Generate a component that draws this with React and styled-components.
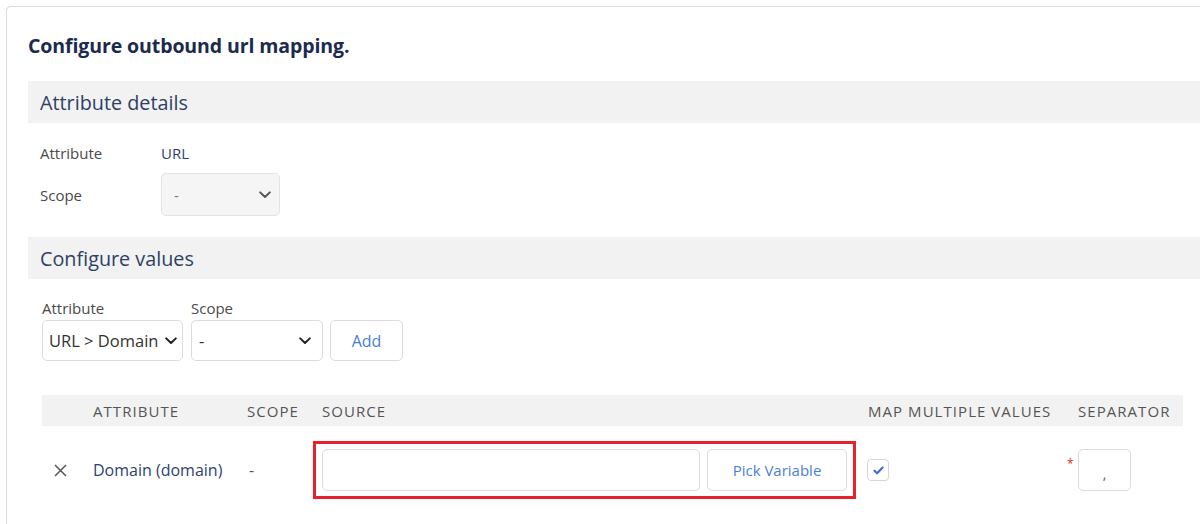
import React from "react";
import styled, { createGlobalStyle } from "styled-components";

const Global = createGlobalStyle`
  html, body { margin: 0; padding: 0; background: #fff; }
  body { font-family: "Open Sans", "Noto Sans", sans-serif; color: #444; overflow: hidden; }
  * { box-sizing: border-box; }
`;

const Card = styled.div`
  margin: 6px 0 0 6px;
  border: 1px solid #dcdcdc;
  border-right: none;
  border-radius: 5px 0 0 0;
  padding: 26px 0 40px 21px;
  min-height: 540px;
`;

const Title = styled.h1`
  margin: 0 0 22px 0;
  font-size: 19.5px;
  font-weight: 700;
  line-height: 26px;
  color: #1b2a4e;
  letter-spacing: -0.1px;
`;

const SectionBar = styled.div`
  background: #f2f2f2;
  height: 42px;
  display: flex;
  align-items: center;
  padding-left: 12px;
  font-size: 19.8px;
  color: #2e3f66;
`;

const Details = styled.div`
  padding: 16px 0 21px 12px;
  display: grid;
  grid-template-columns: 121px auto;
  row-gap: 6px;
  align-items: center;
`;

const Label = styled.div`
  font-size: 15px;
  color: #4a4a4a;
  line-height: ${(p) => p.$lh || "20px"};
`;

const Value = styled.div`
  font-size: 15px;
  color: #2e3f6e;
  line-height: 20px;
`;

const SelectBox = styled.div`
  width: ${(p) => p.$w}px;
  height: ${(p) => p.$h || 41}px;
  border: 1px solid ${(p) => (p.$disabled ? "#e3e3e3" : "#dcdcdc")};
  background: ${(p) => (p.$disabled ? "#f5f5f5" : "#fff")};
  border-radius: 5px;
  display: flex;
  align-items: center;
  justify-content: space-between;
  padding: 0 ${(p) => p.$pr || 12}px 0 ${(p) => p.$pl || 12}px;
  font-size: ${(p) => (p.$disabled ? 15 : 16.5)}px;
  color: ${(p) => (p.$disabled ? "#777" : "#333")};
  white-space: nowrap;
`;

const Chevron = ({ color = "#333" }) => (
  <svg width="12" height="8" viewBox="0 0 12 8">
    <path d="M1.2 1.4 L6 6 L10.8 1.4" fill="none" stroke={color} strokeWidth="2" strokeLinecap="round" strokeLinejoin="round" />
  </svg>
);

const Values = styled.div`
  padding: 19px 0 0 14px;
`;

const Controls = styled.div`
  display: flex;
  gap: 8px;
  align-items: flex-end;
`;

const Field = styled.div`
  display: flex;
  flex-direction: column;
  gap: 2px;
`;

const Button = styled.div`
  width: ${(p) => p.$w}px;
  height: ${(p) => p.$h || 41}px;
  margin-left: ${(p) => p.$ml || 0}px;
  border: 1px solid #dcdcdc;
  border-radius: 5px;
  background: #fff;
  display: flex;
  align-items: center;
  justify-content: center;
  color: #4a7fd6;
  font-size: ${(p) => p.$fs || 15}px;
`;

const cols = "51px 154px 75px 546px 210px 105px";

const TableHead = styled.div`
  margin-top: 34px;
  display: grid;
  width: max-content;
  grid-template-columns: ${cols};
  height: 31px;
  align-items: center;
  background: #f2f2f2;
  font-size: 15px;
  letter-spacing: 1.05px;
  color: #555;
`;

const HeadCell = styled.div`
  white-space: nowrap;
`;

const Row = styled.div`
  display: grid;
  width: max-content;
  grid-template-columns: ${cols};
  align-items: center;
  padding-top: 15px;
`;

const Cell = styled.div`
  font-size: 16px;
  color: ${(p) => p.$c || "#2e3f6e"};
  padding-left: ${(p) => p.$pl || 0}px;
  position: relative;
  display: flex;
  align-items: center;
`;

const Highlight = styled.div`
  margin-left: -9px;
  width: 543px;
  border: 3px solid #e8202a;
  padding: 5px 6px;
  display: flex;
  gap: 7px;
`;

const TextInput = styled.div`
  width: ${(p) => p.$w}px;
  height: 42px;
  border: 1px solid #dcdcdc;
  border-radius: 5px;
  background: #fff;
  display: flex;
  align-items: center;
  justify-content: center;
  padding-top: 6px;
  color: #555;
  font-size: 14px;
`;

const Check = styled.div`
  width: 22px;
  height: 22px;
  border: 1px solid #d6d6d6;
  border-radius: 4px;
  display: flex;
  align-items: center;
  justify-content: center;
  margin-left: -1px;
`;

const Star = styled.span`
  position: absolute;
  left: -11px;
  top: 9px;
  color: #e8202a;
  font-size: 12px;
  line-height: 12px;
`;

export default function App() {
  return (
    <>
      <Global />
      <Card>
        <Title>Configure outbound url mapping.</Title>
        <SectionBar>Attribute details</SectionBar>
        <Details>
          <Label $lh="28px">Attribute</Label>
          <Value>URL</Value>
          <Label>Scope</Label>
          <SelectBox $w={119} $h={43} $disabled $pr={8}>
            <span>-</span>
            <Chevron color="#555" />
          </SelectBox>
        </Details>
        <SectionBar>Configure values</SectionBar>
        <Values>
          <Controls>
            <Field>
              <Label>Attribute</Label>
              <SelectBox $w={141} $pl={6} $pr={5}>
                <span>URL &gt; Domain</span>
                <Chevron color="#222" />
              </SelectBox>
            </Field>
            <Field>
              <Label>Scope</Label>
              <SelectBox $w={132} $pl={7} $pr={11}>
                <span>-</span>
                <Chevron color="#222" />
              </SelectBox>
            </Field>
            <Button $w={73} $ml={-1} $fs={16}>Add</Button>
          </Controls>
          <TableHead>
            <HeadCell />
            <HeadCell>ATTRIBUTE</HeadCell>
            <HeadCell>SCOPE</HeadCell>
            <HeadCell>SOURCE</HeadCell>
            <HeadCell>MAP MULTIPLE VALUES</HeadCell>
            <HeadCell>SEPARATOR</HeadCell>
          </TableHead>
          <Row>
            <Cell $pl={12}>
              <svg width="13" height="13" viewBox="0 0 13 13">
                <path d="M1 1 L12 12 M12 1 L1 12" stroke="#555" strokeWidth="1.5" />
              </svg>
            </Cell>
            <Cell>Domain (domain)</Cell>
            <Cell $c="#555" $pl={2}>-</Cell>
            <Cell>
              <Highlight>
                <TextInput $w={378} />
                <Button $w={140} $h={42}>Pick Variable</Button>
              </Highlight>
            </Cell>
            <Cell>
              <Check>
                <svg width="11" height="9" viewBox="0 0 12 10">
                  <path d="M1.5 5.2 L4.5 8 L10.5 1.8" fill="none" stroke="#3a6fd0" strokeWidth="2.4" strokeLinecap="round" strokeLinejoin="round" />
                </svg>
              </Check>
            </Cell>
            <Cell>
              <Star>*</Star>
              <TextInput $w={53}>,</TextInput>
            </Cell>
          </Row>
        </Values>
      </Card>
    </>
  );
}
